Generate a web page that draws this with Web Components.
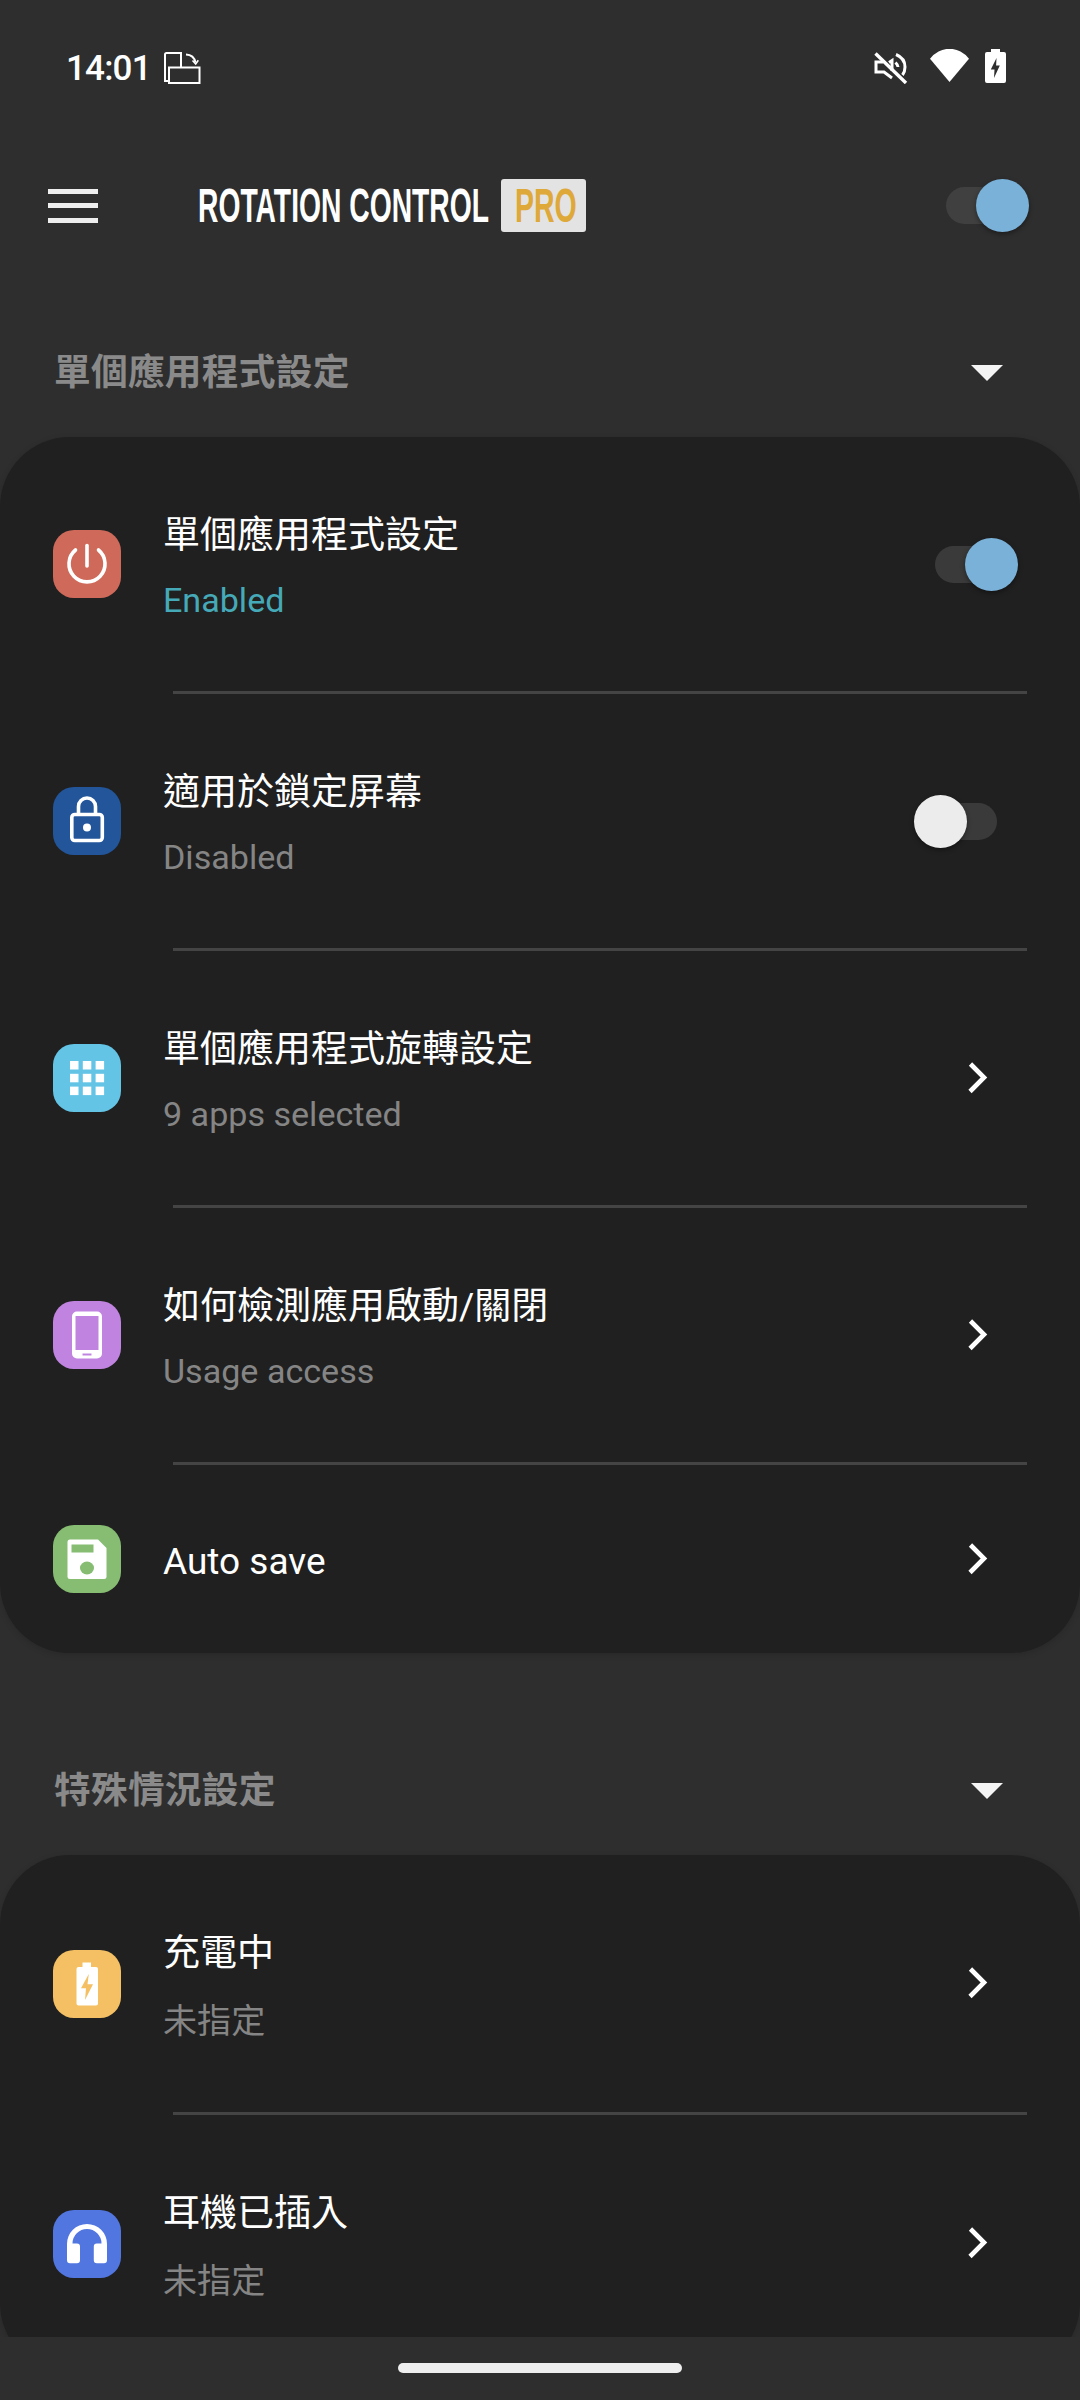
<!DOCTYPE html>
<html lang="zh-Hant">
<head>
<meta charset="utf-8">
<title>Rotation Control</title>
<style>
  html, body { margin: 0; padding: 0; background: #2e2e2e; }
  body { font-family: Roboto, "Noto Sans CJK TC", sans-serif; }
</style>
</head>
<body>
<rc-screen>
  <rc-status-bar></rc-status-bar>
  <rc-top-bar></rc-top-bar>

  <rc-section-head first>單個應用程式設定</rc-section-head>
  <rc-card>
    <rc-row icon="power" height="254">
      單個應用程式設定
      <span slot="sub" style="color:#45a9b8">Enabled</span>
      <rc-switch slot="end" on style="margin-right:62px"></rc-switch>
    </rc-row>
    <rc-divider></rc-divider>
    <rc-row icon="lock" height="254">
      適用於鎖定屏幕
      <span slot="sub">Disabled</span>
      <rc-switch slot="end" style="margin-right:83px"></rc-switch>
    </rc-row>
    <rc-divider></rc-divider>
    <rc-row icon="grid" height="254">
      單個應用程式旋轉設定
      <span slot="sub">9 apps selected</span>
      <rc-chevron slot="end"></rc-chevron>
    </rc-row>
    <rc-divider></rc-divider>
    <rc-row icon="phone" height="254">
      如何檢測應用啟動/關閉
      <span slot="sub">Usage access</span>
      <rc-chevron slot="end"></rc-chevron>
    </rc-row>
    <rc-divider></rc-divider>
    <rc-row icon="save" height="188">
      Auto save
      <rc-chevron slot="end"></rc-chevron>
    </rc-row>
  </rc-card>

  <rc-section-head>特殊情況設定</rc-section-head>
  <rc-card style="--text-pad:7px;--sub-gap:23px">
    <rc-row icon="battery" height="257">
      充電中
      <span slot="sub">未指定</span>
      <rc-chevron slot="end" style="margin-top:-2px"></rc-chevron>
    </rc-row>
    <rc-divider></rc-divider>
    <rc-row icon="headphones" height="258">
      耳機已插入
      <span slot="sub">未指定</span>
      <rc-chevron slot="end" style="margin-top:-2px"></rc-chevron>
    </rc-row>
  </rc-card>

  <rc-nav></rc-nav>
</rc-screen>

<script>
// small helper so every component just hands over its markup
class RcBase extends HTMLElement {
  constructor() {
    super();
    this.attachShadow({ mode: 'open' });
  }
  render(html) {
    this.shadowRoot.innerHTML = html;
  }
}

class RcScreen extends RcBase {
  connectedCallback() {
    this.render(`
      <style>
        :host { display: block; position: relative; width: 1080px; height: 2400px; overflow: hidden;
                background: #2e2e2e; color: #fff; }
      </style>
      <slot></slot>`);
  }
}

class RcStatusBar extends RcBase {
  connectedCallback() {
    this.render(`
      <style>
        :host { display: flex; align-items: flex-start; height: 131px; box-sizing: border-box;
                padding: 49px 74px 0 66px; }
        .time { font: 500 35px/42px Roboto, sans-serif; letter-spacing: -.8px; color: #fff; height: 42px; margin-top: -1px; }
        svg { display: block; flex: none; }
        .rotate { margin: 3px 0 0 13px; }
        .mute { margin: 3px 0 0 auto; }
        .wifi { margin: 0 0 0 22px; }
        .batt { margin: 0 0 0 16px; }
      </style>
      <span class="time">14:01</span>
      <svg class="rotate" width="37" height="32" viewBox="0 0 37 32" fill="none" stroke="#fff" stroke-width="2">
        <path d="M4 29H1V2.5A1.5 1.5 0 0 1 2.5 1H17V15"/>
        <rect x="5" y="15.5" width="30.5" height="15.5"/>
        <path d="M22 2.500c5 .2 8.500 3.300 9.500 8"/>
        <path d="M28.500 8.500l3.200 3.500 2.600-3.800" stroke-width="1.600"/>
      </svg>
      <svg class="mute" width="34" height="32" viewBox="0 0 34 32" fill="none" stroke="#fff" stroke-width="3">
        <path d="M9 10H2v10h8l8 6"/>
        <path d="M18 19V8.500l-3 2"/>
        <path d="M22 2.500C28 5 31 10 31 15c0 3-1 6-2.500 8"/>
        <path d="M21.500 10.500c1.500 1.500 2.500 3 2.500 4.500"/>
        <path d="M1.500 1.500L32 31" stroke-width="3.400"/>
      </svg>
      <svg class="wifi" width="39" height="33" viewBox="0 0 39 33" fill="#fff">
        <path d="M19.500 33L0 9.800A24 24 0 0 1 39 9.800Z"/>
      </svg>
      <svg class="batt" width="21" height="34" viewBox="0 0 21 34" fill="#fff">
        <path fill-rule="evenodd" d="M6 0h9v3h4a2 2 0 0 1 2 2v27a2 2 0 0 1-2 2H2a2 2 0 0 1-2-2V5a2 2 0 0 1 2-2h4ZM11.500 9 5.800 20.500h3.700L9 29l5.800-12.500h-3.700Z"/>
      </svg>`);
  }
}

class RcTopBar extends RcBase {
  connectedCallback() {
    this.render(`
      <style>
        :host { display: flex; align-items: center; height: 149px; box-sizing: border-box; padding: 0 51px 0 48px; }
        .menu { display: flex; flex-direction: column; gap: 9.500px; width: 50px; flex: none; }
        .menu i { display: block; height: 5px; background: #eee; }
        .logo { display: flex; align-items: center; margin-left: 100px; font-family: "Liberation Sans", sans-serif; font-weight: 700; }
        .name { display: block; width: 303px; height: 53px; overflow: visible; white-space: nowrap; color: #fff;
                font-size: 47.500px; line-height: 53px; transform: scaleX(.595); transform-origin: 0 50%; }
        .pro { display: block; width: 85px; height: 53px; background: #e3e3e3; border-radius: 3px; overflow: hidden; }
        .pro span { display: block; white-space: nowrap; color: #dfa93a; font-size: 47.500px; line-height: 53px;
                    transform: scaleX(.6); transform-origin: 14px 50%; padding-left: 14px; }
        rc-switch { margin-left: auto; }
      </style>
      <div class="menu"><i></i><i></i><i></i></div>
      <div class="logo">
        <span class="name">ROTATION CONTROL</span>
        <span class="pro"><span>PRO</span></span>
      </div>
      <rc-switch on bright></rc-switch>`);
  }
}

class RcSectionHead extends RcBase {
  connectedCallback() {
    this.render(`
      <style>
        :host { display: flex; align-items: center; justify-content: space-between; box-sizing: border-box;
                height: 128px; padding: 0 77px 0 54px; margin-top: 74px; }
        :host([first]) { margin-top: 29px; }
        .label { font: 700 36.750px/44px Roboto, "Noto Sans CJK TC", sans-serif; letter-spacing: .2px; color: #8a8a8a; }
        svg { display: block; flex: none; }
      </style>
      <span class="label"><slot></slot></span>
      <svg width="32" height="16" viewBox="0 0 32 16"><path d="M0 0H32L16 16Z" fill="#f4f4f4"/></svg>`);
  }
}

class RcCard extends RcBase {
  connectedCallback() {
    this.render(`
      <style>
        :host { display: block; background: #202020; border-radius: 70px; box-shadow: 0 2px 6px rgba(0,0,0,.14); }
      </style>
      <slot></slot>`);
  }
}

class RcDivider extends RcBase {
  connectedCallback() {
    this.render(`
      <style>
        :host { display: block; height: 3px; margin: 0 53px 0 173px; background: #444; }
      </style>`);
  }
}

class RcRow extends RcBase {
  connectedCallback() {
    const height = this.getAttribute('height') || 254;
    const hasSub = !!this.querySelector('[slot=sub]');
    this.render(`
      <style>
        :host { display: flex; align-items: center; box-sizing: border-box; height: ${height}px; padding-left: 53px; }
        .text { flex: 1; min-width: 0; margin-left: 42px; padding-top: ${hasSub ? 'var(--text-pad, 7.5px)' : '5px'}; }
        .title { font: 400 37px/44px Roboto, "Noto Sans CJK TC", sans-serif; color: #fff; white-space: nowrap; }
        .sub { font: 400 34.100px/44px Roboto, "Noto Sans CJK TC", sans-serif; color: #858585; margin-top: var(--sub-gap, 19.5px);
               white-space: nowrap; }
      </style>
      <rc-icon kind="${this.getAttribute('icon')}"></rc-icon>
      <div class="text">
        <div class="title"><slot></slot></div>
        ${hasSub ? '<div class="sub"><slot name="sub"></slot></div>' : ''}
      </div>
      <slot name="end"></slot>`);
  }
}

class RcSwitch extends RcBase {
  connectedCallback() {
    const on = this.hasAttribute('on');
    const track = this.hasAttribute('bright') ? '#404040' : '#3a3a3a';
    this.render(`
      <style>
        :host { display: block; position: relative; flex: none; width: 83px; height: 53px; }
        .track { position: absolute; top: 8px; ${on ? 'left: 0' : 'right: 0'}; width: 72px; height: 37px;
                 border-radius: 19px; background: ${track}; }
        .thumb { position: absolute; top: 0; ${on ? 'right: 0' : 'left: 0'}; width: 53px; height: 53px; border-radius: 50%;
                 background: ${on ? '#7ab1d8' : '#ececec'}; box-shadow: 0 2px 5px rgba(0,0,0,.4); }
      </style>
      <div class="track"></div>
      <div class="thumb"></div>`);
  }
}

class RcChevron extends RcBase {
  connectedCallback() {
    this.render(`
      <style>
        :host { display: block; flex: none; width: 22px; height: 34px; margin-right: 91px; }
        svg { display: block; }
      </style>
      <svg width="22" height="34" viewBox="0 0 22 34" fill="none" stroke="#fff" stroke-width="4.600">
        <path d="M3.500 3 L17 16.500 L3 30.500"/>
      </svg>`);
  }
}

// one white glyph per tile, drawn on a 68 x 68 box
const ICONS = {
  power: ['#cf6a5b', `<g fill="none" stroke="#fff" stroke-width="3.600" stroke-linecap="round">
      <path d="M22.500 20A18 18 0 1 0 45.500 20"/><path d="M34 15.500V36"/></g>`],
  lock: ['#22559a', `<g fill="none" stroke="#fff" stroke-width="3.600">
      <rect x="18.800" y="27.500" width="30.500" height="26" rx="3"/>
      <path d="M25.500 27V19.500a8.500 8.500 0 0 1 17 0V27"/></g>
      <circle cx="34" cy="40.500" r="4" fill="#fff"/>`],
  grid: ['#63c4e6', `<g fill="#fff">
      <rect x="17" y="17" width="8.500" height="8.500"/><rect x="29.800" y="17" width="8.500" height="8.500"/><rect x="42.600" y="17" width="8.500" height="8.500"/>
      <rect x="17" y="29.800" width="8.500" height="8.500"/><rect x="29.800" y="29.800" width="8.500" height="8.500"/><rect x="42.600" y="29.800" width="8.500" height="8.500"/>
      <rect x="17" y="42.600" width="8.500" height="8.500"/><rect x="29.800" y="42.600" width="8.500" height="8.500"/><rect x="42.600" y="42.600" width="8.500" height="8.500"/></g>`],
  phone: ['#c084e0', `<path fill="#fff" fill-rule="evenodd" d="M24 10.500h20a5 5 0 0 1 5 5v37a5 5 0 0 1-5 5H24a5 5 0 0 1-5-5v-37a5 5 0 0 1 5-5ZM22.500 15v34h23V15ZM29.500 52.500v2h9v-2Z"/>`],
  save: ['#86bd72', `<path fill="#fff" d="M17 14.500H45L53.500 23V51.500a2.500 2.500 0 0 1-2.500 2.500H17a2.500 2.500 0 0 1-2.500-2.500V17a2.500 2.500 0 0 1 2.500-2.500Z"/>
      <rect x="18.500" y="19.500" width="22" height="8" fill="#86bd72"/>
      <ellipse cx="34" cy="43" rx="7" ry="6.400" fill="#86bd72"/>`],
  battery: ['#f4c063', `<path fill="#fff" d="M29.500 12.500h8.500V17h5a2 2 0 0 1 2 2v34.500a2 2 0 0 1-2 2H25.500a2 2 0 0 1-2-2V19a2 2 0 0 1 2-2h4Z"/>
      <path fill="#f4c063" d="M35.800 24 28 38.300h5l-1 11.700 8-15.700h-5.500Z"/>`],
  headphones: ['#5276e0', `<path fill="#fff" d="M14 34A20 20 0 0 1 54 34V50.300a3 3 0 0 1-3 3H43.800a3 3 0 0 1-3-3V36.500a3 3 0 0 1 3-3H48.500A14.500 14.500 0 0 0 19.500 33.500H24a3 3 0 0 1 3 3V50.300a3 3 0 0 1-3 3H17a3 3 0 0 1-3-3Z"/>`]
};

class RcIcon extends RcBase {
  connectedCallback() {
    const [bg, glyph] = ICONS[this.getAttribute('kind')];
    this.render(`
      <style>
        :host { display: block; flex: none; width: 68px; height: 68px; border-radius: 21px; background: ${bg}; }
        svg { display: block; }
      </style>
      <svg width="68" height="68" viewBox="0 0 68 68">${glyph}</svg>`);
  }
}

class RcNav extends RcBase {
  connectedCallback() {
    this.render(`
      <style>
        :host { display: flex; justify-content: center; position: absolute; left: 0; right: 0; bottom: 0; height: 63px;
                background: #2e2e2e; }
        .pill { width: 284px; height: 10px; margin-top: 26px; border-radius: 5px; background: #eee; }
      </style>
      <div class="pill"></div>`);
  }
}

customElements.define('rc-screen', RcScreen);
customElements.define('rc-status-bar', RcStatusBar);
customElements.define('rc-top-bar', RcTopBar);
customElements.define('rc-section-head', RcSectionHead);
customElements.define('rc-card', RcCard);
customElements.define('rc-divider', RcDivider);
customElements.define('rc-row', RcRow);
customElements.define('rc-switch', RcSwitch);
customElements.define('rc-chevron', RcChevron);
customElements.define('rc-icon', RcIcon);
customElements.define('rc-nav', RcNav);
</script>
</body>
</html>
